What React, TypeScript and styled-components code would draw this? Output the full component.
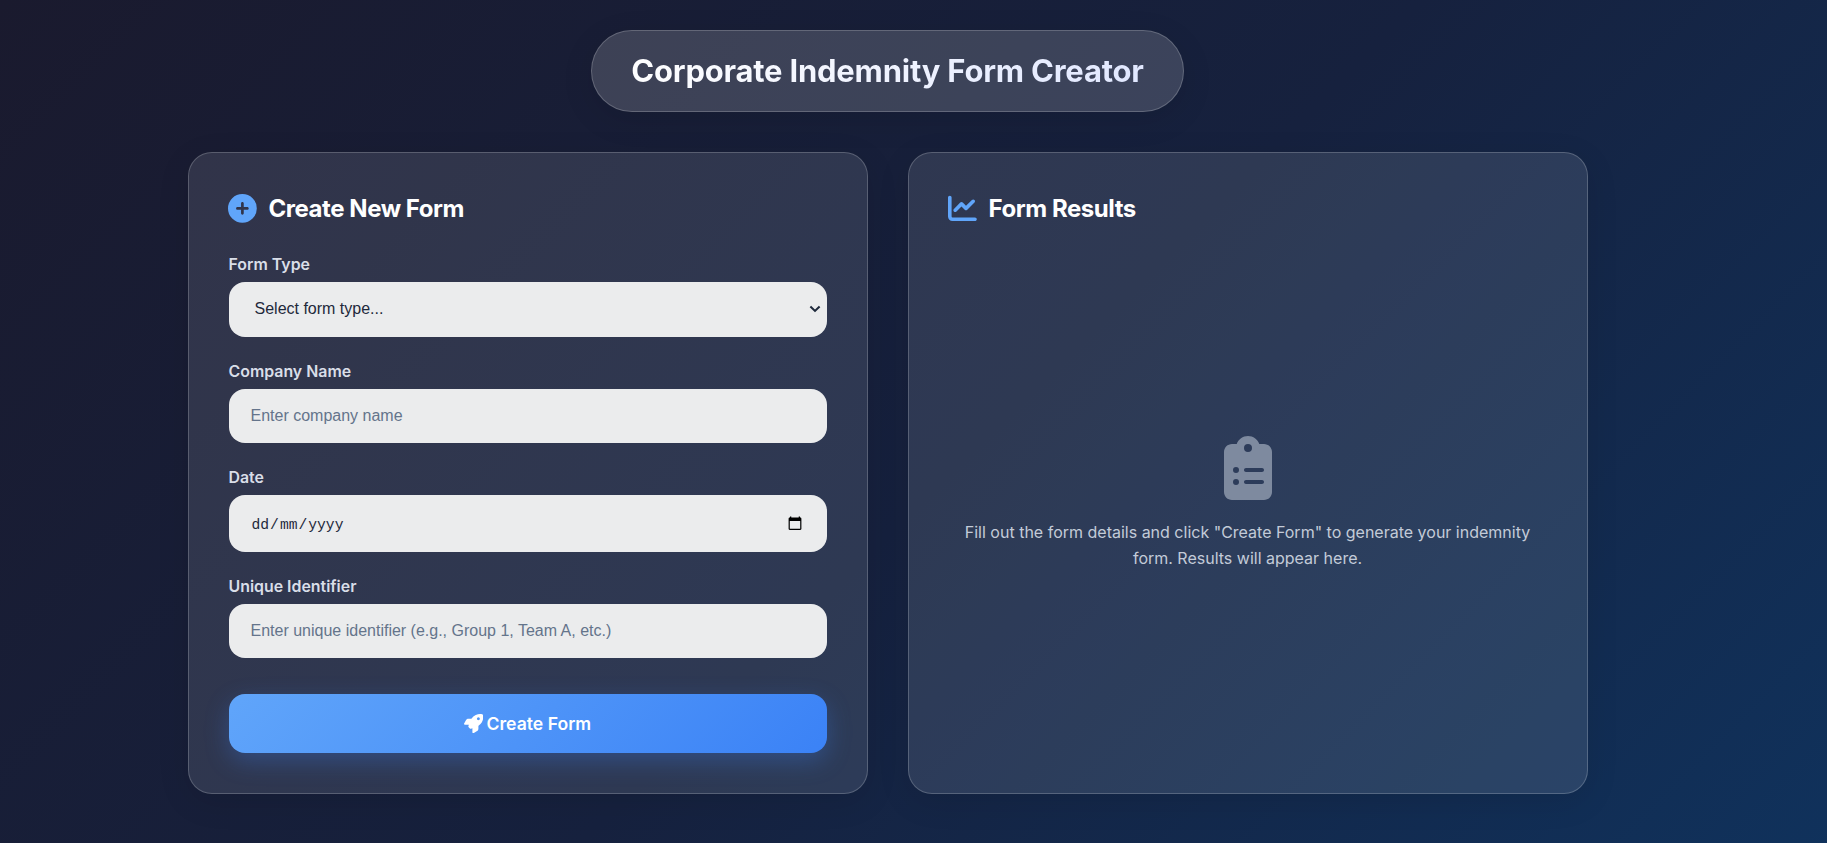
import React from 'react';
import styled, { createGlobalStyle } from 'styled-components';
import { FaChartLine, FaCirclePlus, FaClipboardList, FaRocket } from 'react-icons/fa6';

const GlobalStyle = createGlobalStyle`
  *, *::before, *::after { box-sizing: border-box; }
  body {
    margin: 0;
    font-family: Inter, "Liberation Sans", sans-serif;
    line-height: 1.6;
    overflow: hidden;
  }
`;

const Page = styled.div`
  min-height: 100vh;
  padding: 30px 51px 0 0;
  background: linear-gradient(135deg, #1a1a2e 0%, #16213e 50%, #0f3460 100%) top left / 100% 1020px;
  display: flex;
  flex-direction: column;
  align-items: center;
`;

const TitlePill = styled.header`
  width: 593px;
  height: 82px;
  margin: 0 1px 40px 0;
  display: flex;
  align-items: center;
  justify-content: center;
  background: rgba(255, 255, 255, 0.16);
  border: 1px solid rgba(255, 255, 255, 0.2);
  border-radius: 41px;
  box-shadow: 0 8px 32px rgba(0, 0, 0, 0.1);
`;

const Title = styled.h1`
  margin: 0;
  font-size: 31px;
  font-weight: 700;
  line-height: 40px;
  letter-spacing: -0.22px;
  white-space: nowrap;
  background: linear-gradient(135deg, #ffffff, #e0e7ff);
  background-clip: text;
  -webkit-background-clip: text;
  color: transparent;
`;

const Columns = styled.main`
  width: 1400px;
  display: grid;
  grid-template-columns: 1fr 1fr;
  gap: 40px;
`;

const Card = styled.section`
  height: 642px;
  padding: 40px;
  display: flex;
  flex-direction: column;
  background: rgba(240, 245, 255, 0.113);
  border: 1px solid rgba(255, 255, 255, 0.2);
  border-radius: 24px;
  box-shadow: 0 8px 32px rgba(0, 0, 0, 0.1);
`;

const CardHeading = styled.h2`
  flex: none;
  height: 31.4px;
  margin: 0 0 25px -0.8px;
  display: flex;
  align-items: center;
  gap: 11.5px;
  color: #ffffff;
  font-size: 24px;
  font-weight: 700;
  line-height: 31px;
  letter-spacing: -0.45px;
  white-space: nowrap;

  svg {
    width: 28.8px;
    height: 28.8px;
    color: #60a5fa;
  }
`;

const Field = styled.div`
  margin-bottom: 20px;
`;

const Label = styled.label`
  display: block;
  padding-top: 3.3px;
  margin: 0 0 4.7px -0.5px;
  color: #d9dee8;
  font-size: 15.9px;
  font-weight: 600;
  line-height: 24.3px;
`;

const Control = styled.div<{ $height: number; $indent?: number; $right?: number }>`
  width: 100%;
  height: ${(p) => p.$height}px;
  padding: 0 ${(p) => p.$right ?? 20}px 0 ${(p) => p.$indent ?? 21.5}px;
  display: flex;
  align-items: center;
  justify-content: space-between;
  background: #ebeced;
  border-radius: 16px;
  color: #1e293b;
  font-family: "Liberation Sans", Arial, sans-serif;
  font-size: 16px;
  line-height: 18px;
`;

const TextInput = styled.input`
  width: 100%;
  padding: 0;
  border: 0;
  outline: 0;
  background: transparent;
  color: inherit;
  font: inherit;

  &::placeholder { color: #64748b; opacity: 1; }
`;

const DateText = styled.span`
  display: flex;
  gap: 1px;
  padding: 3.5px 0 0 1px;
  font-family: "Liberation Mono", monospace;
  font-size: 14.67px;
`;

const SubmitButton = styled.button`
  flex: none;
  width: 100%;
  height: 59px;
  margin-top: 16px;
  padding: 0 1px 0 0;
  display: flex;
  align-items: center;
  justify-content: center;
  gap: 3.5px;
  border: 0;
  border-radius: 16px;
  background: linear-gradient(135deg, #60a5fa, #3b82f6);
  box-shadow: 0 8px 25px rgba(59, 130, 246, 0.3);
  color: #ffffff;
  font-family: Inter, sans-serif;
  font-size: 17.6px;
  font-weight: 600;

  svg { width: 19.2px; height: 19.2px; }
`;

const EmptyState = styled.div`
  flex: 1;
  padding: 5px 1px 0 0;
  display: flex;
  flex-direction: column;
  align-items: center;
  justify-content: center;
  gap: 20px;
  color: #c3cbd8;
  text-align: center;

  svg { width: 64px; height: 64px; color: #7e8a9f; }
`;

const EmptyText = styled.p`
  width: 590px;
  margin: 0;
  font-size: 16px;
  line-height: 25.6px;
`;

function Chevron() {
  return (
    <svg width="12" height="8" viewBox="0 0 12 8" fill="none">
      <path d="M1.4 1.6 6 5.9 10.6 1.6" stroke="#1e293b" strokeWidth="2.1" />
    </svg>
  );
}

function CalendarIcon() {
  return (
    <svg width="14" height="15" viewBox="0 0 14 15">
      <path
        fill="#000"
        fillRule="evenodd"
        d="M2 .5h1.3v1h7.4v-1H12v1h.2c.7 0 1.2.5 1.2 1.2v10.1c0 .7-.5 1.2-1.2 1.2H1.8c-.7 0-1.2-.5-1.2-1.2V2.7c0-.7.5-1.2 1.2-1.2H2zM1.8 5v7.8h10.4V5z"
      />
    </svg>
  );
}

export default function App() {
  return (
    <>
      <GlobalStyle />
      <Page>
        <TitlePill>
          <Title>Corporate Indemnity Form Creator</Title>
        </TitlePill>
        <Columns>
          <Card>
            <CardHeading>
              <FaCirclePlus />
              <span>Create New Form</span>
            </CardHeading>
            <Field>
              <Label>Form Type</Label>
              <Control $height={55} $indent={25.5} $right={6.2}>
                <span>Select form type...</span>
                <Chevron />
              </Control>
            </Field>
            <Field>
              <Label>Company Name</Label>
              <Control $height={54}>
                <TextInput placeholder="Enter company name" />
              </Control>
            </Field>
            <Field>
              <Label>Date</Label>
              <Control $height={56.5} $right={25}>
                <DateText>
                  <span>dd</span>
                  <span>/</span>
                  <span>mm</span>
                  <span>/</span>
                  <span>yyyy</span>
                </DateText>
                <CalendarIcon />
              </Control>
            </Field>
            <Field>
              <Label>Unique Identifier</Label>
              <Control $height={53.8}>
                <TextInput placeholder="Enter unique identifier (e.g., Group 1, Team A, etc.)" />
              </Control>
            </Field>
            <SubmitButton type="button">
              <FaRocket />
              <span>Create Form</span>
            </SubmitButton>
          </Card>
          <Card>
            <CardHeading>
              <FaChartLine />
              <span>Form Results</span>
            </CardHeading>
            <EmptyState>
              <FaClipboardList />
              <EmptyText>
                Fill out the form details and click "Create Form" to generate your indemnity form. Results will appear here.
              </EmptyText>
            </EmptyState>
          </Card>
        </Columns>
      </Page>
    </>
  );
}
